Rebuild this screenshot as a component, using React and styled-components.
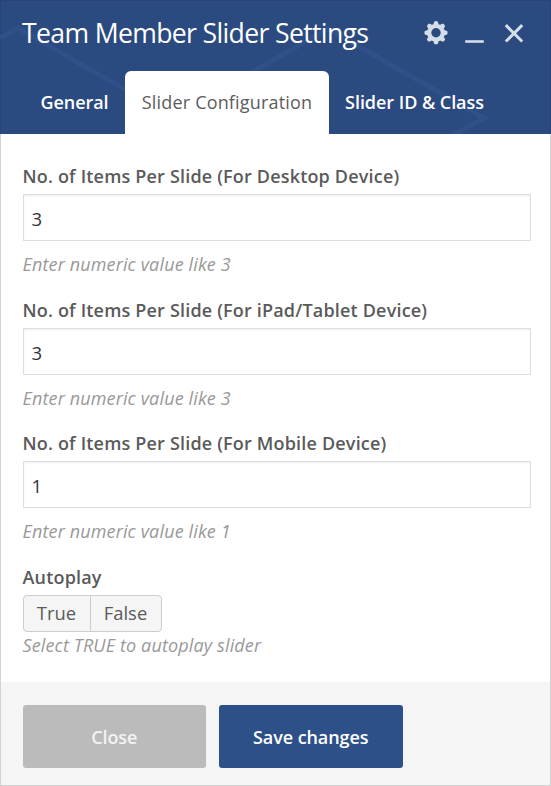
import React, { useState } from "react";
import styled, { createGlobalStyle } from "styled-components";

const GlobalStyle = createGlobalStyle`
  *, *::before, *::after { box-sizing: border-box; }
  body {
    margin: 0;
    background: #fff;
    font-family: "Open Sans", "Noto Sans", sans-serif;
    color: #5a5a5a;
  }
  button, input { font-family: inherit; }
`;

const Panel = styled.section`
  display: flex;
  flex-direction: column;
  width: 551px;
  height: 786px;
  border: 1px solid #d2d2d2;
  border-top: 0;
  background: #fff;
`;

const Header = styled.header`
  position: relative;
  flex: none;
  display: flex;
  flex-direction: column;
  justify-content: space-between;
  height: 134px;
  margin: 0 -1px;
  background: #2a4a80;
  border: 1px solid #27447a;
  border-bottom: 0;
`;

const Pattern = styled.svg`
  position: absolute;
  left: -1px;
  top: -1px;
  width: 551px;
  height: 134px;
`;

const TitleRow = styled.div`
  position: relative;
  display: flex;
  align-items: center;
  justify-content: space-between;
  height: 64px;
  padding: 0 24px 0 21px;
`;

const Title = styled.h1`
  margin: 0;
  font-size: 26.6px;
  font-weight: 400;
  line-height: 36px;
  letter-spacing: -0.65px;
  white-space: nowrap;
  color: #fff;
`;

const Controls = styled.div`
  display: flex;
  align-items: center;
  gap: 15px;
`;

const Control = styled.button`
  display: block;
  width: 24px;
  height: 24px;
  padding: 0;
  border: 0;
  background: none;
  color: #d6deea;
  svg { display: block; }
`;

const Tabs = styled.nav`
  position: relative;
  display: flex;
  height: 63px;
  padding-left: 23px;
`;

const Tab = styled.button`
  flex: none;
  width: ${(p) => p.$width}px;
  padding: 0;
  border: 0;
  border-radius: 6px 6px 0 0;
  background: ${(p) => (p.$active ? "#fff" : "transparent")};
  color: ${(p) => (p.$active ? "#5c5c5c" : "#fff")};
  font-size: 18px;
  font-weight: ${(p) => (p.$active ? 400 : 600)};
  line-height: 63px;
  letter-spacing: ${(p) => (p.$active ? "0.17px" : "-0.05px")};
  white-space: nowrap;
`;

const Body = styled.div`
  flex: 1;
  min-height: 0;
  padding: 28px 20px 0 21.5px;
`;

const Field = styled.div`
  display: flex;
  flex-direction: column;
  align-items: flex-start;
  height: ${(p) => (p.$last ? "auto" : "133.6px")};
`;

const Label = styled.label`
  height: 32px;
  font-size: 18px;
  font-weight: 600;
  line-height: 28px;
  letter-spacing: 0.18px;
  white-space: nowrap;
  color: #5a5a5a;
`;

const TextInput = styled.input`
  width: 508px;
  height: 47px;
  padding: 2px 8px 0;
  border: 1.5px solid #dedede;
  border-radius: 0;
  outline: 0;
  background: #fff;
  box-shadow: inset 0 1px 2px rgba(0, 0, 0, 0.07);
  font-size: 18.6px;
  color: #32323a;
`;

const Hint = styled.p`
  margin: ${(p) => (p.$tight ? "0" : "10px")} 0 0;
  font-size: 18px;
  font-style: italic;
  line-height: 27px;
  letter-spacing: 0.14px;
  white-space: nowrap;
  color: #999;
`;

const Segments = styled.div`
  display: flex;
  height: 37px;
  border: 1.5px solid #ccc;
  border-radius: 4px;
  background: #f5f5f5;
`;

const Segment = styled.button`
  width: ${(p) => p.$width}px;
  padding: 0;
  border: 0;
  border-left: ${(p) => (p.$divided ? "1.5px solid #ccc" : "0")};
  background: none;
  font-size: 18.4px;
  line-height: 34px;
  color: #5a5a5a;
`;

const Footer = styled.footer`
  flex: none;
  display: flex;
  gap: 13px;
  height: 104px;
  padding: 23px 21.5px 0;
  border-bottom: 1px solid #d2d2d2;
  margin-bottom: -1px;
  background: #f5f5f5;
`;

const Action = styled.button`
  width: 183.5px;
  height: 63px;
  padding: 0;
  border: 0;
  border-radius: 3px;
  background: ${(p) => (p.$primary ? "#2d5089" : "#bbb")};
  color: ${(p) => (p.$primary ? "#fff" : "#f3f3f3")};
  font-size: 18px;
  font-weight: 600;
  letter-spacing: -0.08px;
`;

const teeth = [0, 45, 90, 135, 180, 225, 270, 315];

const GearIcon = () => (
  <svg width="24" height="24" viewBox="0 0 24 24" fill="currentColor">
    <circle cx="12" cy="11.7" r="6.8" fill="none" stroke="currentColor" strokeWidth="4.2" />
    {teeth.map((a) => (
      <path key={a} d="M9.2 3.7 L10.3 0.5 Q12 -0.3 13.7 0.5 L14.8 3.7 Z" transform={`rotate(${a} 12 11.7)`} />
    ))}
  </svg>
);

const MinimizeIcon = () => (
  <svg width="24" height="24" viewBox="0 0 24 24">
    <path d="M2.2 20.5H20.8" stroke="currentColor" strokeWidth="2.6" />
  </svg>
);

const CloseIcon = () => (
  <svg width="24" height="24" viewBox="0 0 24 24">
    <path d="M3.8 4.1L20.2 20.5M20.2 4.1L3.8 20.5" stroke="currentColor" strokeWidth="3" />
  </svg>
);

const fields = [
  { id: "desktop", label: "No. of Items Per Slide (For Desktop Device)", value: "3" },
  { id: "tablet", label: "No. of Items Per Slide (For iPad/Tablet Device)", value: "3" },
  { id: "mobile", label: "No. of Items Per Slide (For Mobile Device)", value: "1" },
];

const tabs = [
  { name: "General", width: 101 },
  { name: "Slider Configuration", width: 204 },
  { name: "Slider ID & Class", width: 171 },
];

export default function App() {
  const [active, setActive] = useState("Slider Configuration");
  return (
    <>
      <GlobalStyle />
      <Panel>
        <Header>
          <Pattern viewBox="0 0 551 134" fill="none" stroke="#2f5089" strokeWidth="5">
            <path d="M0 38L18 28L173 117L328 29L484 118L452 136" />
          </Pattern>
          <TitleRow>
            <Title>Team Member Slider Settings</Title>
            <Controls>
              <Control aria-label="Settings"><GearIcon /></Control>
              <Control aria-label="Minimize"><MinimizeIcon /></Control>
              <Control aria-label="Close"><CloseIcon /></Control>
            </Controls>
          </TitleRow>
          <Tabs>
            {tabs.map((t) => (
              <Tab key={t.name} $width={t.width} $active={t.name === active} onClick={() => setActive(t.name)}>
                {t.name}
              </Tab>
            ))}
          </Tabs>
        </Header>
        <Body>
          {fields.map((f) => (
            <Field key={f.id}>
              <Label htmlFor={f.id}>{f.label}</Label>
              <TextInput id={f.id} defaultValue={f.value} />
              <Hint>Enter numeric value like {f.value}</Hint>
            </Field>
          ))}
          <Field $last>
            <Label>Autoplay</Label>
            <Segments>
              <Segment $width={66}>True</Segment>
              <Segment $width={71} $divided>False</Segment>
            </Segments>
            <Hint $tight>Select TRUE to autoplay slider</Hint>
          </Field>
        </Body>
        <Footer>
          <Action>Close</Action>
          <Action $primary>Save changes</Action>
        </Footer>
      </Panel>
    </>
  );
}
